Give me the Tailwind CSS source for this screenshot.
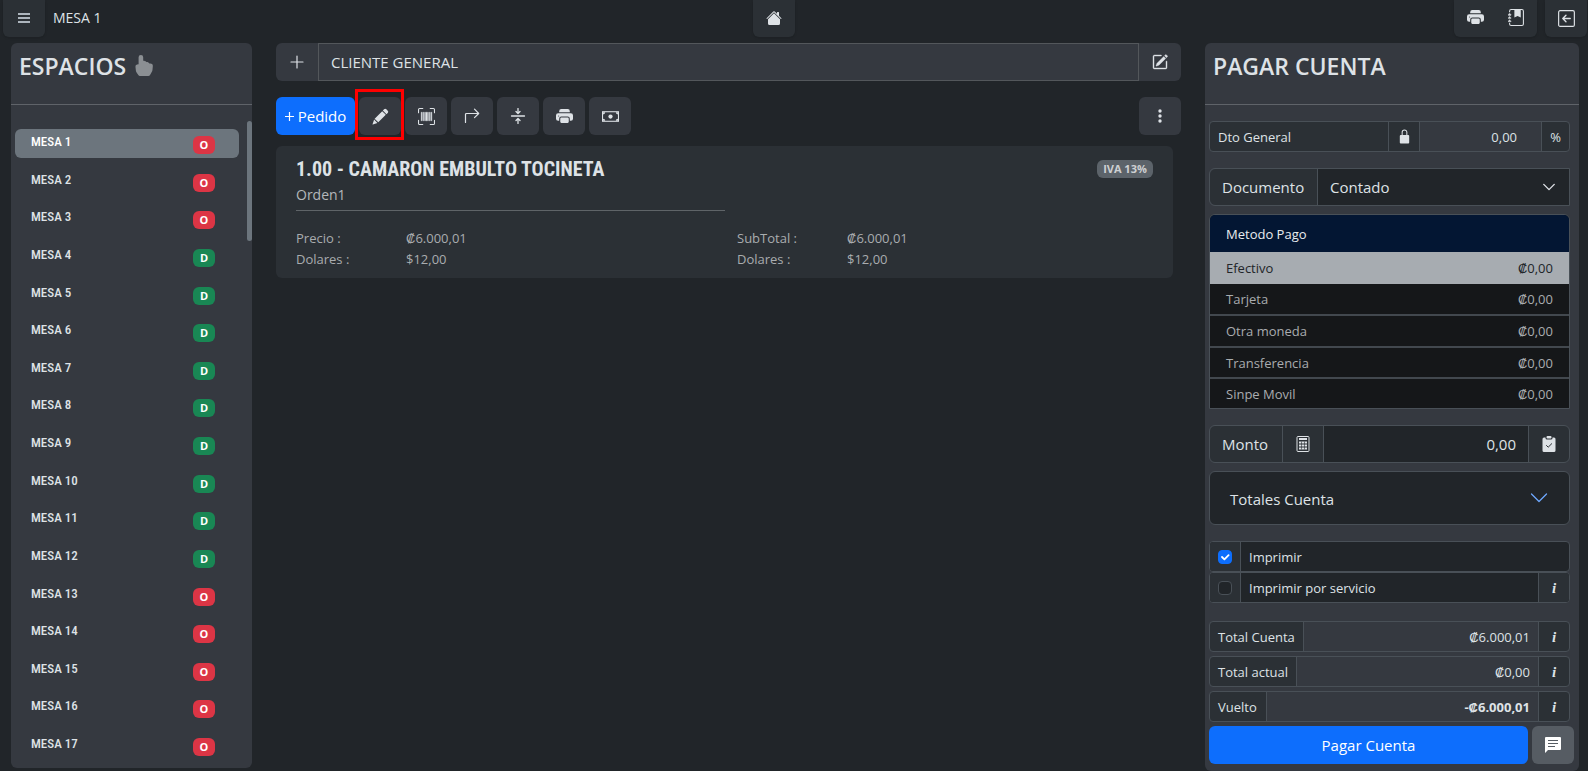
<!DOCTYPE html>
<html lang="es">
<head>
  <meta charset="utf-8">
  <meta name="viewport" content="width=device-width, initial-scale=1">
  <title>MESA 1</title>
  <script src="https://cdn.jsdelivr.net/npm/@tailwindcss/browser@4"></script>
</head>
<body class="bg-[#212529] text-[#dee2e6] font-['Segoe_UI','Open_Sans',sans-serif] text-[15px] leading-6">
<div class="flex h-screen min-h-[771px] flex-col">

  <!-- Top bar -->
  <header class="mb-1.5 grid h-[37px] shrink-0 grid-cols-[18fr_auto_19fr] pr-px pl-[3px]">
    <div class="flex items-center gap-2">
      <button aria-label="Menu" class="flex h-full w-[42px] items-center justify-center rounded-b-md bg-[#2b3035] pb-px text-[#adb5bd] shadow-sm">
        <svg class="size-4" viewBox="0 0 16 16" fill="none" stroke="currentColor" stroke-width="1.8"><path d="M2 4h12M2 8h12M2 12h12"/></svg>
      </button>
      <span class="pb-0.5 text-sm">MESA 1</span>
    </div>
    <button aria-label="Inicio" class="flex w-[42px] items-center justify-center rounded-b-md bg-[#2b3035] pb-0.5 shadow-sm">
      <svg class="size-4" viewBox="0 0 16 16" fill="currentColor"><path d="M8.707 1.5a1 1 0 0 0-1.414 0L.646 8.146a.5.5 0 0 0 .708.708L8 2.207l6.646 6.647a.5.5 0 0 0 .708-.708L13 5.793V2.5a.5.5 0 0 0-.5-.5h-1a.5.5 0 0 0-.5.5v1.293z"/><path d="m8 3.293 6 6V13.5a1.5 1.5 0 0 1-1.5 1.5h-9A1.5 1.5 0 0 1 2 13.5V9.293z"/></svg>
    </button>
    <div class="flex justify-end gap-2">
      <div class="flex rounded-b-md bg-[#2b3035] shadow-sm">
        <button aria-label="Imprimir" class="flex w-[42px] items-center justify-center pb-0.5">
          <svg class="size-[17px]" viewBox="0 0 16 16" fill="currentColor"><path d="M5 1a2 2 0 0 0-2 2v1h10V3a2 2 0 0 0-2-2zm6 8H5a1 1 0 0 0-1 1v3a1 1 0 0 0 1 1h6a1 1 0 0 0 1-1v-3a1 1 0 0 0-1-1"/><path d="M0 7a2 2 0 0 1 2-2h12a2 2 0 0 1 2 2v3a2 2 0 0 1-2 2h-1v-2a2 2 0 0 0-2-2H5a2 2 0 0 0-2 2v2H2a2 2 0 0 1-2-2zm2.5 1a.5.5 0 1 0 0-1 .5.5 0 0 0 0 1"/></svg>
        </button>
        <button aria-label="Diario" class="flex w-[41px] items-center justify-center pb-0.5">
          <svg class="size-[17px]" viewBox="0 0 16 16" fill="currentColor"><path d="M6 1h6v7L9 6.500 6 8z"/><path d="M3 0h10a2 2 0 0 1 2 2v12a2 2 0 0 1-2 2H3a2 2 0 0 1-2-2v-1h1v1a1 1 0 0 0 1 1h10a1 1 0 0 0 1-1V2a1 1 0 0 0-1-1H3a1 1 0 0 0-1 1v1H1V2a2 2 0 0 1 2-2"/><path d="M1 5v-.5a.5.5 0 0 1 1 0V5h.5a.5.5 0 0 1 0 1h-2a.5.5 0 0 1 0-1zm0 3v-.5a.5.5 0 0 1 1 0V8h.5a.5.5 0 0 1 0 1h-2a.5.5 0 0 1 0-1zm0 3v-.5a.5.5 0 0 1 1 0v.5h.5a.5.5 0 0 1 0 1h-2a.5.5 0 0 1 0-1z" stroke="currentColor" stroke-width=".3"/></svg>
        </button>
      </div>
      <button aria-label="Salir" class="flex w-[42px] items-center justify-center rounded-b-md bg-[#2b3035] pb-px shadow-sm">
        <svg class="size-[17px]" viewBox="0 0 16 16" fill="none" stroke="currentColor" stroke-width="1.1" stroke-linecap="round" stroke-linejoin="round"><rect x=".6" y=".6" width="14.8" height="14.8" rx="1.4"/><path d="M11.500 8h-7m3-3-3 3 3 3" stroke-width="1.3"/></svg>
      </button>
    </div>
  </header>

  <main class="flex min-h-0 flex-1 gap-6 pr-[9px] pl-[11px]">

    <!-- Espacios -->
    <aside class="relative mb-[3px] flex w-[241px] shrink-0 flex-col rounded-md bg-[#353940]">
      <div class="flex h-[62px] items-start gap-2 border-b border-[#5f6369] px-2 pt-2">
        <h2 class="text-[23px] leading-[30px] font-semibold">ESPACIOS</h2>
        <svg class="mt-1 size-[21px] text-[#8b8f93]" viewBox="0 0 16 16" fill="currentColor"><path d="M8.500 4.466V1.750a1.750 1.750 0 1 0-3.500 0v5.340l-1.200.240a1.500 1.500 0 0 0-1.196 1.636l.345 3.106a2.500 2.500 0 0 0 .405 1.110l1.433 2.150A1.500 1.500 0 0 0 6.035 16h6.385a1.500 1.500 0 0 0 1.302-.756l1.395-2.441a3.500 3.500 0 0 0 .444-1.389l.271-2.715a2 2 0 0 0-1.990-2.199h-.581a5 5 0 0 0-.195-.248c-.191-.229-.510-.568-.880-.716-.364-.146-.846-.132-1.158-.108l-.132.012a1.260 1.260 0 0 0-.560-.642 2.600 2.600 0 0 0-.738-.288c-.310-.062-.739-.058-1.050-.046z" transform="translate(-1.500 0)"/></svg>
      </div>
      <ul id="mesas" class="mt-4 flex flex-1 flex-col justify-between py-2 pr-[13px] pl-1 font-['Roboto_Condensed','Roboto',sans-serif]"></ul>
      <div class="absolute top-[78px] right-0 h-[120px] w-[5px] rounded-full bg-[#6c757d]"></div>
    </aside>

    <!-- Pedido -->
    <section class="min-w-0 flex-1">
      <div class="flex h-[38px]">
        <button aria-label="Agregar cliente" class="flex w-[42px] items-center justify-center rounded-l-md bg-[#353940]">
          <svg class="size-4" viewBox="0 0 16 16" stroke="currentColor" stroke-width="1.2" stroke-linecap="round"><path d="M8 2v12M2 8h12"/></svg>
        </button>
        <input aria-label="Cliente" value="CLIENTE GENERAL" class="min-w-0 flex-1 border border-[#53575b] bg-[#353940] px-3">
        <button aria-label="Editar cliente" class="flex w-[42px] items-center justify-center rounded-r-md bg-[#353940]">
          <svg class="size-4" viewBox="0 0 16 16" fill="currentColor"><path d="M15.502 1.940a.5.5 0 0 1 0 .706L14.459 3.690l-2-2L13.502.646a.5.5 0 0 1 .707 0l1.293 1.293zm-1.750 2.456-2-2L4.939 9.210a.5.5 0 0 0-.121.196l-.805 2.414a.250.250 0 0 0 .316.316l2.414-.805a.5.5 0 0 0 .196-.120z" stroke="currentColor" stroke-width=".3"/><path d="M1 13.500A1.500 1.500 0 0 0 2.500 15h11a1.500 1.500 0 0 0 1.500-1.500v-6a.5.5 0 0 0-1 0v6a.5.5 0 0 1-.5.5h-11a.5.5 0 0 1-.5-.5v-11a.5.5 0 0 1 .5-.5H9a.5.5 0 0 0 0-1H2.500A1.500 1.500 0 0 0 1 2.500z" stroke="currentColor" stroke-width=".4"/></svg>
        </button>
      </div>

      <div class="mt-4 flex h-[38px] gap-1">
        <button class="flex w-[79px] items-center justify-center gap-1 rounded-md bg-[#0d6efd] text-white">
          <svg class="size-[9px]" viewBox="0 0 9 9" stroke="currentColor" stroke-width="1.2"><path d="M4.500 0v9M0 4.500h9"/></svg>
          Pedido
        </button>
        <button aria-label="Editar" class="relative flex w-[42px] items-center justify-center rounded-md bg-[#353940]">
          <svg class="size-[17px]" viewBox="0 0 16 16" fill="currentColor"><path d="M11.400 1.200a1.500 1.500 0 0 1 2.100 0l1.300 1.300a1.500 1.500 0 0 1 0 2.100l-1.200 1.200-3.400-3.400zM9.600 3l3.400 3.400-7.100 7.100-3.400-3.400zM2 10.900 5.100 14 .800 15.500a.250.250 0 0 1-.300-.300z"/></svg>
          <span class="absolute -top-2 -right-[3px] -bottom-[5px] -left-1 border-3 border-[#fe0000]"></span>
        </button>
        <button aria-label="Codigo de barras" class="flex w-[42px] items-center justify-center rounded-md bg-[#353940]">
          <svg class="size-[17px]" viewBox="0 0 16 16" fill="currentColor"><path d="M1.500 1a.5.5 0 0 0-.5.5v3a.5.5 0 0 1-1 0v-3A1.500 1.500 0 0 1 1.500 0h3a.5.5 0 0 1 0 1zM11 .5a.5.5 0 0 1 .5-.5h3A1.500 1.500 0 0 1 16 1.500v3a.5.5 0 0 1-1 0v-3a.5.5 0 0 0-.5-.5h-3a.5.5 0 0 1-.5-.5M.5 11a.5.5 0 0 1 .5.5v3a.5.5 0 0 0 .5.5h3a.5.5 0 0 1 0 1h-3A1.500 1.500 0 0 1 0 14.500v-3a.5.5 0 0 1 .5-.5m15 0a.5.5 0 0 1 .5.5v3a1.500 1.500 0 0 1-1.500 1.500h-3a.5.5 0 0 1 0-1h3a.5.5 0 0 0 .5-.5v-3a.5.5 0 0 1 .5-.5"/><path d="M3 4h1v8H3zm2 0h1v8H5zm2 0h2v8H7zm3 0h1v8h-1zm2 0h1v8h-1z" stroke="currentColor" stroke-width=".4"/></svg>
        </button>
        <button aria-label="Mover" class="flex w-[42px] items-center justify-center rounded-md bg-[#353940]">
          <svg class="size-4" viewBox="0 0 16 16" fill="none" stroke="currentColor" stroke-width="1.200" stroke-linecap="round" stroke-linejoin="round"><path d="M1.500 14.500v-8a1 1 0 0 1 1-1h12M10.500 1.200l4.200 4.300-4.200 4.200"/></svg>
        </button>
        <button aria-label="Dividir" class="flex w-[42px] items-center justify-center rounded-md bg-[#353940]">
          <svg class="size-4" viewBox="0 0 16 16" fill="none" stroke="currentColor" stroke-width="1.300" stroke-linecap="round" stroke-linejoin="round"><path d="M1.500 8h13M8 .5v4.800M6 3.500l2 2 2-2M8 15.500v-4.800M6 12.500l2-2 2 2"/></svg>
        </button>
        <button aria-label="Imprimir pedido" class="flex w-[42px] items-center justify-center rounded-md bg-[#353940]">
          <svg class="size-[17px]" viewBox="0 0 16 16" fill="currentColor"><path d="M5 1a2 2 0 0 0-2 2v1h10V3a2 2 0 0 0-2-2zm6 8H5a1 1 0 0 0-1 1v3a1 1 0 0 0 1 1h6a1 1 0 0 0 1-1v-3a1 1 0 0 0-1-1"/><path d="M0 7a2 2 0 0 1 2-2h12a2 2 0 0 1 2 2v3a2 2 0 0 1-2 2h-1v-2a2 2 0 0 0-2-2H5a2 2 0 0 0-2 2v2H2a2 2 0 0 1-2-2zm2.500 1a.5.5 0 1 0 0-1 .5.5 0 0 0 0 1"/></svg>
        </button>
        <button aria-label="Efectivo" class="flex w-[42px] items-center justify-center rounded-md bg-[#353940]">
          <svg class="size-[17px]" viewBox="0 0 16 16"><rect x=".5" y="3.500" width="15" height="9" fill="none" stroke="currentColor"/><path d="M1 4h2a2 2 0 0 1-2 2zm14 0h-2a2 2 0 0 0 2 2zM1 12h2a2 2 0 0 0-2-2zm14 0h-2a2 2 0 0 1 2-2z" fill="currentColor"/><circle cx="8" cy="8" r="2" fill="currentColor"/></svg>
        </button>
        <button aria-label="Opciones" class="ml-auto flex w-[42px] items-center justify-center rounded-md bg-[#353940]">
          <svg class="size-4" viewBox="0 0 16 16" fill="currentColor"><circle cx="8" cy="3" r="1.700"/><circle cx="8" cy="8" r="1.700"/><circle cx="8" cy="13" r="1.700"/></svg>
        </button>
      </div>

      <article class="mt-[11px] mr-2 h-[132px] rounded-md bg-[#2b3035] px-5 pt-[11px]">
        <div class="flex items-start justify-between">
          <h3 class="font-['Roboto_Condensed','Roboto',sans-serif] text-xl leading-6 font-bold">1.00 - CAMARON EMBULTO TOCINETA</h3>
          <span class="mt-[3px] flex h-[18px] w-14 items-center justify-center rounded-md bg-[#5c636a] text-[11px] font-bold text-[#ced0d2]">IVA 13%</span>
        </div>
        <div class="grid grid-cols-[441fr_416fr] text-[13px] leading-[21px] text-[#a9acaf]">
          <p class="mr-3 border-b border-[#5f6468] pt-[3px] pb-[5px] text-sm leading-[21px] text-[#b4b8bb]">Orden1</p>
          <span></span>
          <dl class="mt-[17px] grid grid-cols-[110px_1fr]">
            <dt>Precio :</dt><dd>₡6.000,01</dd>
            <dt>Dolares :</dt><dd>$12,00</dd>
          </dl>
          <dl class="mt-[17px] grid grid-cols-[110px_1fr]">
            <dt>SubTotal :</dt><dd>₡6.000,01</dd>
            <dt>Dolares :</dt><dd>$12,00</dd>
          </dl>
        </div>
      </article>
    </section>

    <!-- Pagar cuenta -->
    <section class="flex w-[374px] shrink-0 flex-col rounded-md bg-[#353940] text-[13px]">
      <div class="h-[62px] border-b border-[#5f6369] px-2 pt-2">
        <h2 class="text-[23px] leading-[30px] font-semibold">PAGAR CUENTA</h2>
      </div>
      <form class="mt-4 pr-[9px] pl-1">
        <div class="flex h-[31px] divide-x divide-[#495057] overflow-hidden rounded border border-[#495057] bg-[#2b3035]">
          <label for="dto" class="flex flex-1 items-center px-2">Dto General</label>
          <button type="button" aria-label="Bloquear" class="flex w-[31px] items-center justify-center">
            <svg class="size-[15px]" viewBox="0 0 16 16"><path d="M5.500 7V3.500a2.500 2.500 0 0 1 5 0V7" fill="none" stroke="currentColor" stroke-width="1.100"/><rect x="3" y="6.500" width="10" height="9" rx="1" fill="currentColor"/></svg>
          </button>
          <input id="dto" value="0,00" class="w-[122px] bg-[#353940] pr-6 text-right">
          <span class="flex w-[27px] items-center justify-center">%</span>
        </div>

        <div class="relative mt-4 flex h-[38px] rounded-l-md border border-[#495057] text-[15px]">
          <label for="doc" class="flex w-[108px] items-center rounded-l-md border-r border-[#495057] bg-[#2b3035] px-3">Documento</label>
          <select id="doc" class="flex-1 appearance-none bg-[#212529] px-3"><option>Contado</option></select>
          <svg class="pointer-events-none absolute top-[11px] right-[13px] size-3.5" viewBox="0 0 16 16" fill="none" stroke="currentColor" stroke-width="1.600" stroke-linecap="round" stroke-linejoin="round"><path d="m2 5 6 6 6-6"/></svg>
        </div>

        <div class="mt-2 overflow-hidden rounded-t-md border border-[#495057] bg-[#151719]">
          <table class="w-full text-[#a9acaf]">
            <thead><tr class="h-[37px] bg-[#031633] text-left text-[#e9ecef]"><th colspan="2" class="px-4 font-normal">Metodo Pago</th></tr></thead>
            <tbody>
              <tr class="h-8 bg-[#a7acb1] text-[#212529]"><td class="pl-4">Efectivo</td><td class="pr-4 text-right">₡0,00</td></tr>
              <tr class="h-[31px] border-b-2 border-[#42484e]"><td class="pl-4">Tarjeta</td><td class="pr-4 text-right">₡0,00</td></tr>
              <tr class="h-8 border-b-2 border-[#42484e]"><td class="pl-4">Otra moneda</td><td class="pr-4 text-right">₡0,00</td></tr>
              <tr class="h-[31px] border-b-2 border-[#42484e]"><td class="pl-4">Transferencia</td><td class="pr-4 text-right">₡0,00</td></tr>
              <tr class="h-[30px]"><td class="pl-4">Sinpe Movil</td><td class="pr-4 text-right">₡0,00</td></tr>
            </tbody>
          </table>
        </div>

        <div class="mt-4 flex h-[38px] divide-x divide-[#495057] overflow-hidden rounded-md border border-[#495057] bg-[#2b3035] text-[15px]">
          <label for="monto" class="flex w-[73px] items-center px-3">Monto</label>
          <button type="button" aria-label="Calculadora" class="flex w-[41px] items-center justify-center">
            <svg class="size-4" viewBox="0 0 16 16" fill="none" stroke="currentColor"><rect x="2" y=".5" width="12" height="15" rx="1"/><path d="M4 3h8M4 6.500h8M4 9.500h8M4 12.500h8" stroke-width="2" /><path d="M6.500 5.500v8M9.500 5.500v8" stroke="#2b3035" stroke-width=".6"/></svg>
          </button>
          <input id="monto" value="0,00" class="min-w-0 flex-1 bg-[#212529] px-3 text-right">
          <button type="button" aria-label="Aplicar monto" class="flex w-10 items-center justify-center">
            <svg class="size-4" viewBox="0 0 16 16"><path d="M3 1.500h1.500V2A1.500 1.500 0 0 0 6 3.500h4A1.500 1.500 0 0 0 11.500 2v-.5H13A1.500 1.500 0 0 1 14.500 3v11.500A1.500 1.500 0 0 1 13 16H3a1.500 1.500 0 0 1-1.500-1.500V3A1.500 1.500 0 0 1 3 1.500M6.500 0h3a1 1 0 0 1 1 1v.500a1 1 0 0 1-1 1h-3a1 1 0 0 1-1-1V1a1 1 0 0 1 1-1" fill="currentColor"/><path d="m5.500 9.500 1.700 1.700 3.500-3.500" fill="none" stroke="#2b3035" stroke-linecap="round"/></svg>
          </button>
        </div>

        <button type="button" class="mt-2 flex h-[54px] w-full items-center justify-between rounded-md border border-[#495057] bg-[#212529] px-5 pt-px text-[15px]">
          Totales Cuenta
          <svg class="size-5 text-[#6ea8fe]" viewBox="0 0 16 16" fill="none" stroke="currentColor" stroke-linecap="round" stroke-linejoin="round"><path d="m2 4 6 6 6-6"/></svg>
        </button>

        <div class="mt-4 flex h-[31px] overflow-hidden rounded border border-[#495057] bg-[#212529]">
          <span class="flex w-[31px] items-center justify-center border-r border-[#495057] bg-[#2b3035]">
            <input id="imprimir" type="checkbox" checked class="peer size-3.5 appearance-none rounded border border-[#495057] checked:border-[#0d6efd] checked:bg-[#0d6efd]">
            <svg class="pointer-events-none absolute hidden size-3 text-white peer-checked:block" viewBox="0 0 20 20" fill="none" stroke="currentColor" stroke-width="3" stroke-linecap="round" stroke-linejoin="round"><path d="m5 10 4 4 7-7"/></svg>
          </span>
          <label for="imprimir" class="flex flex-1 items-center px-2">Imprimir</label>
        </div>
        <div class="flex h-[31px] overflow-hidden rounded border border-[#495057] bg-[#212529]">
          <span class="flex w-[31px] items-center justify-center border-r border-[#495057] bg-[#2b3035]">
            <input id="servicio" type="checkbox" class="size-3.5 appearance-none rounded border border-[#495057] bg-[#212529] checked:bg-[#0d6efd]">
          </span>
          <label for="servicio" class="flex flex-1 items-center px-2">Imprimir por servicio</label>
          <button type="button" class="w-[31px] border-l border-[#495057] bg-[#2b3035] font-['Liberation_Serif',serif] text-[15px] font-bold italic">i</button>
        </div>

        <div class="mt-[18px] space-y-1">
          <div class="flex h-[31px] divide-x divide-[#495057] overflow-hidden rounded border border-[#495057] bg-[#2b3035]">
            <label for="total" class="flex w-[94px] items-center px-2 whitespace-nowrap">Total Cuenta</label>
            <input id="total" readonly value="₡6.000,01" class="min-w-0 flex-1 bg-[#353940] px-2 text-right">
            <button type="button" class="w-[30px] font-['Liberation_Serif',serif] text-[15px] font-bold italic">i</button>
          </div>
          <div class="flex h-[31px] divide-x divide-[#495057] overflow-hidden rounded border border-[#495057] bg-[#2b3035]">
            <label for="actual" class="flex w-[87px] items-center px-2 whitespace-nowrap">Total actual</label>
            <input id="actual" readonly value="₡0,00" class="min-w-0 flex-1 bg-[#353940] px-2 text-right">
            <button type="button" class="w-[30px] font-['Liberation_Serif',serif] text-[15px] font-bold italic">i</button>
          </div>
          <div class="flex h-[31px] divide-x divide-[#495057] overflow-hidden rounded border border-[#495057] bg-[#2b3035]">
            <label for="vuelto" class="flex w-[57px] items-center px-2 whitespace-nowrap">Vuelto</label>
            <input id="vuelto" readonly value="-₡6.000,01" class="min-w-0 flex-1 bg-[#353940] px-2 text-right font-bold">
            <button type="button" class="w-[30px] font-['Liberation_Serif',serif] text-[15px] font-bold italic">i</button>
          </div>
        </div>

        <div class="mt-1 -mr-1 flex h-[38px] gap-1 text-[15px]">
          <button type="button" class="flex-1 rounded-md bg-[#0d6efd] text-white">Pagar Cuenta</button>
          <button type="button" aria-label="Comentario" class="flex w-[42px] items-center justify-center rounded-md bg-[#565c63] text-white">
            <svg class="size-[18px]" viewBox="0 0 18 18"><path d="M2 1h14a1 1 0 0 1 1 1v11a1 1 0 0 1-1 1H4l-3 3V2a1 1 0 0 1 1-1" fill="currentColor"/><path d="M4 4.500h10M4 7.500h10M4 10.500h7" stroke="#565c63"/></svg>
          </button>
        </div>
      </form>
    </section>
  </main>
</div>

<script>
  // O = ocupada, D = disponible
  const estados = 'OOODDDDDDDDDOOOOO';

  function renderMesas() {
    const lista = document.getElementById('mesas');
    lista.innerHTML = [...estados].map((estado, i) => `
      <li>
        <button class="flex h-[29px] w-full items-start justify-between rounded-md pt-[5px] pr-6 pl-4 ${i === 0 ? 'bg-[#6c757d] text-white' : ''}">
          <span class="text-[13px] leading-4 font-medium">MESA ${i + 1}</span>
          <span class="mt-0.5 flex h-[18px] w-[22px] items-center justify-center rounded-md text-[11px] font-bold text-white font-['Segoe_UI','Open_Sans',sans-serif] ${estado === 'O' ? 'bg-[#dc3545]' : 'bg-[#198754]'}">${estado}</span>
        </button>
      </li>`).join('');
  }
  renderMesas();
</script>
</body>
</html>
